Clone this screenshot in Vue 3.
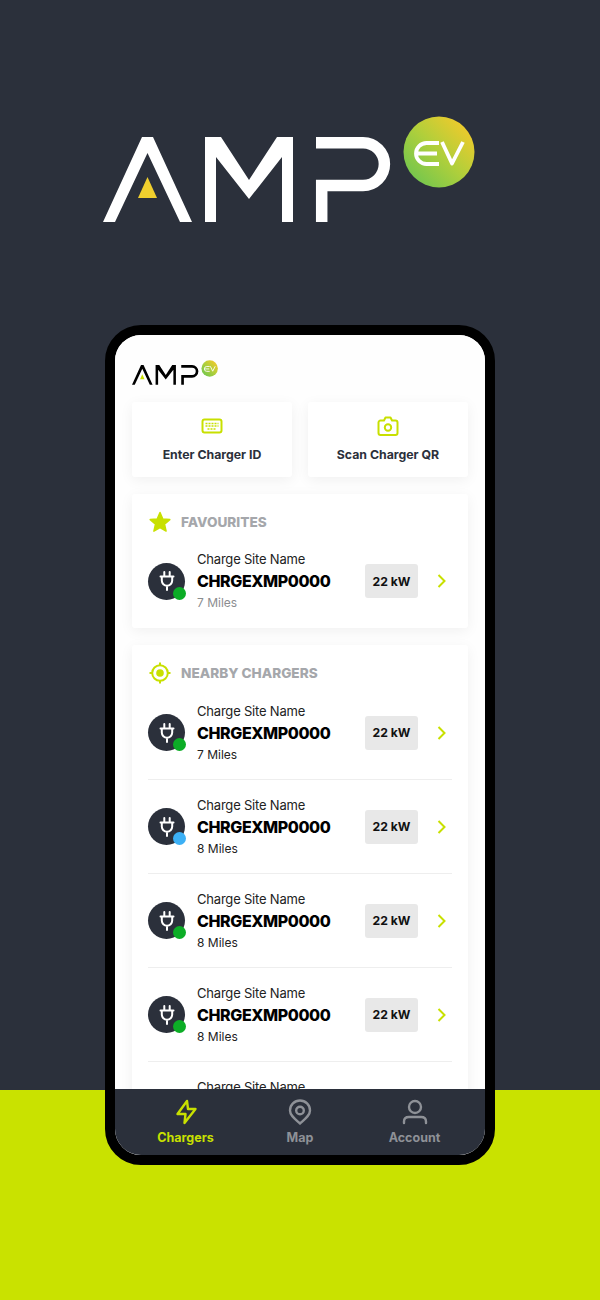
<template>
  <div class="page">
    <svg class="hero-logo" width="372" height="106" viewBox="103 116 372 106" role="img" aria-label="AMP EV">
      <defs>
        <linearGradient id="ev-grad" x1="0" y1="1" x2="1" y2="0">
          <stop offset="0.1" stop-color="#70c64f" />
          <stop offset="0.5" stop-color="#b0cf3b" />
          <stop offset="0.9" stop-color="#f2ca2b" />
        </linearGradient>
        <g id="amp-mark">
          <polygon fill="currentColor" points="142,137 153,137 192,222 180,222 147.5,153 115,222 103,222" />
          <polygon class="tri" points="147.5,177 138,198 157,198" />
          <polygon fill="currentColor" points="205,222 205,137 221,137 249,180 277,137 293,137 293,222 282,222 282,157 249,199 216,157 216,222" />
          <path fill="none" stroke="currentColor" stroke-width="11.5" d="M316 142.7H363A21.4 21.4 0 0 1 363 185.5H321.7V222" />
          <circle cx="439" cy="152" r="35.5" fill="url(#ev-grad)" />
          <path fill="none" stroke="#fff" stroke-width="3.8" stroke-linejoin="round" d="M439 143H426.5A10.5 10.5 0 0 0 426.5 164H439M416 153.5H437M442 142L452 163.5L463 142" />
        </g>
      </defs>
      <use href="#amp-mark" />
    </svg>

    <div class="phone">
      <div class="screen">
        <div class="scroll">
          <svg class="small-logo" width="86" height="25" viewBox="103 116 372 106" role="img" aria-label="AMP EV">
            <use href="#amp-mark" />
          </svg>

          <div class="actions">
            <button class="action">
              <svg width="24" height="24" viewBox="0 0 24 24" fill="none" stroke="#c8e000" stroke-width="2">
                <rect x="2.5" y="5.5" width="19" height="13" rx="2" />
                <path stroke-width="1.4" stroke-dasharray="2 1" d="M5.5 9.5H18.5M5.5 12H18.5M7.5 15H16.5" />
              </svg>
              <span>Enter Charger ID</span>
            </button>
            <button class="action">
              <svg width="24" height="24" viewBox="0 0 24 24" fill="none" stroke="#c8e000" stroke-width="2" stroke-linejoin="round">
                <path d="M4.5 6.5H8L9.5 3.5H14.5L16 6.5H19.5A2 2 0 0 1 21.5 8.5V19A2 2 0 0 1 19.5 21H4.5A2 2 0 0 1 2.5 19V8.5A2 2 0 0 1 4.5 6.5Z" />
                <circle cx="12" cy="13.5" r="3.2" />
              </svg>
              <span>Scan Charger QR</span>
            </button>
          </div>

          <section class="card fav">
            <h2 class="card-title">
              <svg width="24" height="24" viewBox="0 0 24 24" fill="#c8e000" stroke="#c8e000" stroke-width="1.5" stroke-linejoin="round">
                <path d="M12 2.5L14.8 9L21.8 9.6L16.5 14.2L18.1 21.1L12 17.5L5.9 21.1L7.5 14.2L2.2 9.6L9.2 9Z" />
              </svg>
              FAVOURITES
            </h2>
            <div class="row">
              <div class="avatar">
                <svg width="24" height="24" viewBox="0 0 24 24" fill="none" stroke="#fff" stroke-width="2" stroke-linecap="round" stroke-linejoin="round">
                  <path d="M9.3 3V7.5M14.7 3V7.5M5.5 7.5H18.5M6.8 7.5V11.5A5.2 5.2 0 0 0 17.2 11.5V7.5M12 16.7V21" />
                </svg>
                <i class="dot" style="background: #0cad26"></i>
              </div>
              <div class="info">
                <div class="site">Charge Site Name</div>
                <div class="code">CHRGEXMP0000</div>
                <div class="dist grey">7 Miles</div>
              </div>
              <div class="power">22 kW</div>
              <svg class="chev" width="12" height="16" viewBox="0 0 12 16" fill="none" stroke="#c8e000" stroke-width="2"><path d="M2.5 2L8.5 8L2.5 14" /></svg>
            </div>
          </section>

          <section class="card">
            <h2 class="card-title">
              <svg width="24" height="24" viewBox="0 0 24 24" fill="none" stroke="#c8e000" stroke-width="2">
                <circle cx="12" cy="12" r="7.8" />
                <circle cx="12" cy="12" r="3.8" fill="#c8e000" stroke="none" />
                <path d="M12 1.5V4.5M12 19.5V22.5M1.5 12H4.5M19.5 12H22.5" />
              </svg>
              NEARBY CHARGERS
            </h2>
            <div v-for="(c, i) in chargers" :key="i" class="row ruled">
              <div class="avatar">
                <svg width="24" height="24" viewBox="0 0 24 24" fill="none" stroke="#fff" stroke-width="2" stroke-linecap="round" stroke-linejoin="round">
                  <path d="M9.3 3V7.5M14.7 3V7.5M5.5 7.5H18.5M6.8 7.5V11.5A5.2 5.2 0 0 0 17.2 11.5V7.5M12 16.7V21" />
                </svg>
                <i class="dot" :style="{ background: c.status }"></i>
              </div>
              <div class="info">
                <div class="site">Charge Site Name</div>
                <div class="code">CHRGEXMP0000</div>
                <div class="dist">{{ c.miles }} Miles</div>
              </div>
              <div class="power">22 kW</div>
              <svg class="chev" width="12" height="16" viewBox="0 0 12 16" fill="none" stroke="#c8e000" stroke-width="2"><path d="M2.5 2L8.5 8L2.5 14" /></svg>
            </div>
            <!-- next row, only its first line shows above the tab bar -->
            <div class="site peek">Charge Site Name</div>
          </section>
        </div>

        <nav class="tabs">
          <div class="tab active">
            <svg width="28" height="28" viewBox="0 0 28 28" fill="none" stroke="currentColor" stroke-width="2.4" stroke-linejoin="round">
              <path d="M15 3L5.5 16H13.5L12.5 25L23.5 11H16Z" />
            </svg>
            <span>Chargers</span>
          </div>
          <div class="tab">
            <svg width="28" height="28" viewBox="0 0 28 28" fill="none" stroke="currentColor" stroke-width="2.4" stroke-linejoin="round">
              <path d="M14 25.5C9 21 4 17.5 4 12.5A10 10 0 0 1 24 12.5C24 17.5 19 21 14 25.5Z" />
              <circle cx="14" cy="12.5" r="3.8" />
            </svg>
            <span>Map</span>
          </div>
          <div class="tab">
            <svg width="28" height="28" viewBox="0 0 28 28" fill="none" stroke="currentColor" stroke-width="2.4" stroke-linecap="round">
              <circle cx="14" cy="9" r="6" />
              <path d="M3 25V23.5C3 20.5 5 19 8 19H20C23 19 25 20.5 25 23.5V25" />
            </svg>
            <span>Account</span>
          </div>
        </nav>
      </div>
    </div>
  </div>
</template>

<script setup>
const chargers = [
  { miles: 7, status: '#0cad26' },
  { miles: 8, status: '#3cb0f5' },
  { miles: 8, status: '#0cad26' },
  { miles: 8, status: '#0cad26' },
]
</script>

<style scoped>
.page {
  --tri: #f0cf2e;
  width: 600px;
  height: 1300px;
  overflow: hidden;
  color: #fff;
  background: linear-gradient(#2b303b 1090px, #c9e200 1090px);
  font-family: Inter, "Liberation Sans", sans-serif;
}

.hero-logo {
  display: block;
  margin: 116px 0 0 103px;
}

.phone {
  box-sizing: border-box;
  width: 390px;
  height: 840px;
  margin: 103px 0 0 105px;
  border: 10px solid #000;
  border-radius: 36px;
  background: #fff;
  overflow: hidden;
}

.screen {
  display: flex;
  flex-direction: column;
  height: 100%;
  color: #000;
}

.scroll {
  flex: 1;
  min-height: 0;
  overflow: hidden;
  padding: 25px 17px 0;
  background: #fefefe;
}

.small-logo {
  --tri: #c8e000;
  display: block;
  color: #000;
}

.actions {
  display: grid;
  grid-template-columns: 160px 160px;
  gap: 16px;
  margin-top: 17px;
}

.action {
  display: flex;
  flex-direction: column;
  align-items: center;
  gap: 9px;
  height: 75px;
  padding: 12px 0 0;
  border: 0;
  border-radius: 3px;
  background: #fff;
  box-shadow: 0 3px 14px rgba(0, 0, 0, 0.06);
  color: #2b303b;
  font: 700 12.3px/16px Inter, "Liberation Sans", sans-serif;
}

.card {
  margin-top: 17px;
  padding: 0 16px;
  border-radius: 3px;
  background: #fff;
  box-shadow: 0 3px 14px rgba(0, 0, 0, 0.06);
}

.fav {
  height: 134px;
}

.fav .row {
  margin-top: -15px;
}

.card-title {
  display: flex;
  align-items: center;
  gap: 9px;
  height: 55px;
  margin: 0;
  color: #a5a7ab;
  font-size: 13.6px;
  font-weight: 800;
}

.row {
  box-sizing: border-box;
  display: flex;
  align-items: center;
  height: 94px;
  margin-top: -14px;
}

.row + .row {
  margin-top: 0;
}

.ruled {
  border-bottom: 1px solid #eeeeee;
}

.avatar {
  position: relative;
  display: flex;
  align-items: center;
  justify-content: center;
  flex: none;
  width: 37px;
  height: 37px;
  border-radius: 50%;
  background: #2b303b;
}

.dot {
  position: absolute;
  right: -1px;
  bottom: 0;
  width: 13px;
  height: 13px;
  border-radius: 50%;
}

.info {
  flex: 1;
  margin-left: 12px;
}

.site {
  font-size: 13px;
  line-height: 21px;
  letter-spacing: -0.2px;
  color: #222;
}

.peek {
  padding: 15px 0 40px 49px;
}

.code {
  font-size: 16px;
  font-weight: 800;
  line-height: 22px;
  letter-spacing: -0.4px;
}

.dist {
  font-size: 12px;
  line-height: 21px;
  color: #222;
}

.grey {
  color: #8b8d90;
}

.power {
  display: flex;
  align-items: center;
  justify-content: center;
  flex: none;
  width: 53px;
  height: 34px;
  border-radius: 3px;
  background: #e8e8e8;
  color: #111;
  font-size: 12.2px;
  font-weight: 700;
}

.chev {
  flex: none;
  margin: 0 4px 0 18px;
}

.tabs {
  display: grid;
  grid-template-columns: repeat(3, 114.5px);
  justify-content: center;
  flex: none;
  height: 66px;
  background: #2b303b;
}

.tab {
  display: flex;
  flex-direction: column;
  align-items: center;
  padding-top: 9px;
  color: #8e9197;
  font-size: 12.5px;
  font-weight: 700;
  line-height: 16px;
}

.tab.active {
  color: #c8e000;
}

.tab svg {
  display: block;
  margin-bottom: 4px;
}
</style>

<style>
.tri {
  fill: var(--tri);
}
</style>
